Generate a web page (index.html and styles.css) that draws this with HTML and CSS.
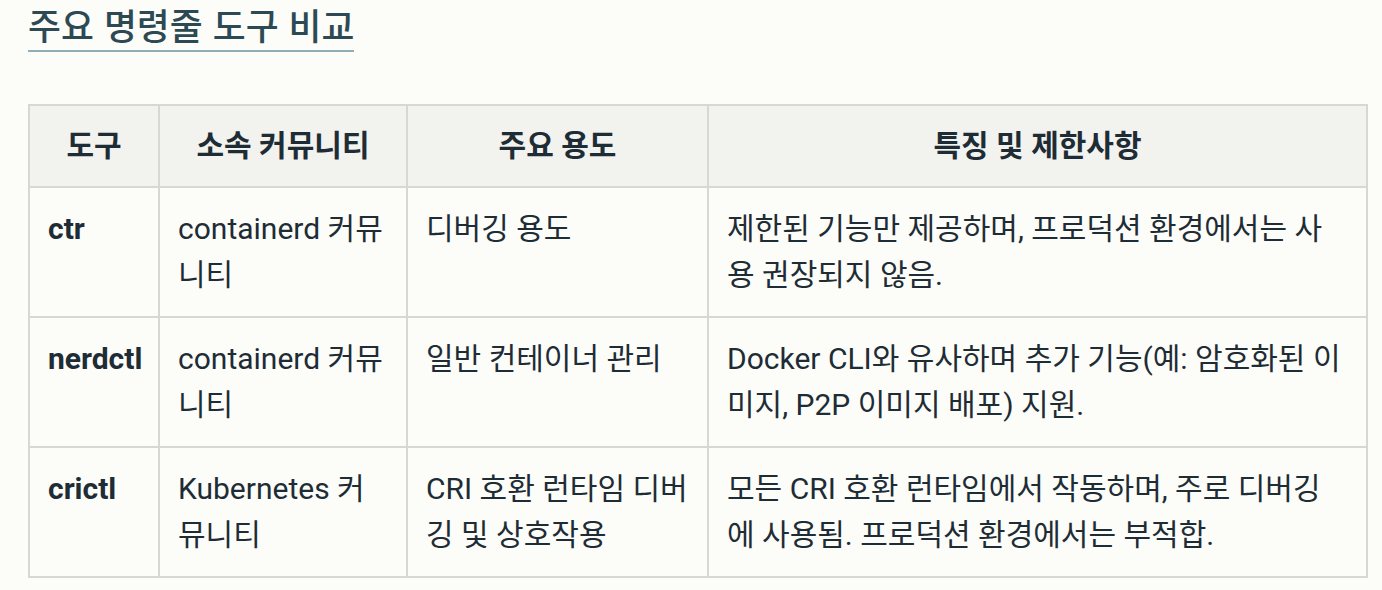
FILE: index.html
```html
<!DOCTYPE html>
<html lang="ko">
<head>
<meta charset="utf-8">
<link rel="stylesheet" href="styles.css">
</head>
<body>
<main class="page">
  <h2 class="title"><span class="title-text">주요 명령줄 도구 비교</span></h2>
  <table class="compare">
    <colgroup>
      <col class="c-tool">
      <col class="c-comm">
      <col class="c-use">
      <col class="c-note">
    </colgroup>
    <thead>
      <tr>
        <th>도구</th>
        <th>소속 커뮤니티</th>
        <th>주요 용도</th>
        <th>특징 및 제한사항</th>
      </tr>
    </thead>
    <tbody>
      <tr>
        <td class="tool">ctr</td>
        <td>containerd 커뮤니티</td>
        <td>디버깅 용도</td>
        <td>제한된 기능만 제공하며, 프로덕션 환경에서는 사용 권장되지 않음.</td>
      </tr>
      <tr>
        <td class="tool">nerdctl</td>
        <td>containerd 커뮤니티</td>
        <td>일반 컨테이너 관리</td>
        <td>Docker CLI와 유사하며 추가 기능(예: 암호화된 이미지, P2P 이미지 배포) 지원.</td>
      </tr>
      <tr>
        <td class="tool">crictl</td>
        <td>Kubernetes 커뮤니티</td>
        <td>CRI 호환 런타임 디버깅 및 상호작용</td>
        <td>모든 CRI 호환 런타임에서 작동하며, 주로 디버깅에 사용됨. 프로덕션 환경에서는 부적합.</td>
      </tr>
    </tbody>
  </table>
</main>
</body>
</html>
```

FILE: styles.css
```css
html, body {
  margin: 0;
  padding: 0;
  background: #fcfcf9;
}

.page {
  padding: 0 28px;
  font-family: Roboto, "Noto Sans CJK KR", sans-serif;
  color: #1e2c35;
}

.title {
  margin: 0;
  font-family: "Noto Sans CJK KR", sans-serif;
  font-size: 35.8px;
  font-weight: 500;
  color: #2d4a54;
  line-height: 48px;
}

.title-text {
  border-bottom: 2px solid #93adb8;
}

.compare {
  margin-top: 56px;
  width: 1338px;
  table-layout: fixed;
  border-collapse: collapse;
  border: 2px solid #d8d8d2;
  font-size: 30px;
  line-height: 46px;
}

.c-tool { width: 130px; }
.c-comm { width: 248px; }
.c-use { width: 301px; }
.c-note { width: 659px; }

.compare th,
.compare td {
  border: 2px solid #d8d8d2;
  padding: 18px 18px;
  vertical-align: top;
  text-align: left;
}

.compare th {
  padding-top: 17px;
  padding-bottom: 17px;
  background: #f2f2ee;
  text-align: center;
  font-weight: 700;
  vertical-align: middle;
}

.compare td.tool {
  font-weight: 700;
  white-space: nowrap;
}
```
